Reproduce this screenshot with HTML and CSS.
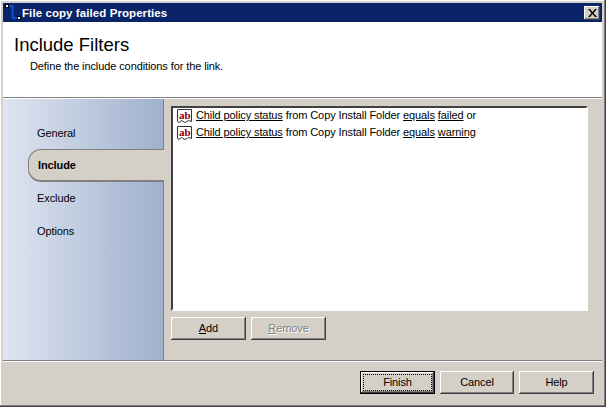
FILE: index.html
```html
<!DOCTYPE html>
<html lang="en">
<head>
    <meta charset="UTF-8">
    <meta name="viewport" content="width=device-width, initial-scale=1.0">
    <title>File copy failed Properties</title>
    <link rel="stylesheet" href="styles.css">
</head>
<body>
    <div class="window">
        <div class="titlebar">
            <svg class="app-icon" width="19" height="19" viewBox="0 0 19 19">
                <path d="M5 3H9.500V15H15" fill="none" stroke="#0a4fd0" stroke-width="2"/>
                <rect x="2.500" y="1.500" width="3" height="3" fill="#fff" stroke="#000"/>
                <rect x="14.500" y="13.500" width="3" height="3" fill="#fff" stroke="#000"/>
            </svg>
            <span class="title-text">File copy failed Properties</span>
            <button class="close-btn" type="button">
                <svg width="9" height="8" viewBox="0 0 9 8">
                    <path d="M0 0H2L4.500 3L7 0H9L5.500 4L9 8H7L4.500 5L2 8H0L3.500 4Z" fill="#000"/>
                </svg>
            </button>
        </div>

        <div class="header">
            <h1>Include Filters</h1>
            <p>Define the include conditions for the link.</p>
        </div>

        <div class="main">
            <nav class="sidebar">
                <div class="nav-item">General</div>
                <div class="nav-item active">Include</div>
                <div class="nav-item">Exclude</div>
                <div class="nav-item">Options</div>
            </nav>

            <div class="content">
                <div class="filter-list">
                    <div class="filter-row">
                        <svg class="ab-icon" width="17" height="16" viewBox="0 0 17 16">
                            <path d="M1.500 1.500H15.500V13.500L12.500 12.500L9 14.500L5.500 12.500L3 14.500L1.500 13.500Z" fill="#fff" stroke="#333"/>
                            <text x="3" y="10.500" class="ab-text">ab</text>
                        </svg>
                        <span class="filter-text"><u>Child policy status</u> from Copy Install Folder <u>equals</u> <u>failed</u> or</span>
                    </div>
                    <div class="filter-row">
                        <svg class="ab-icon" width="17" height="16" viewBox="0 0 17 16">
                            <path d="M1.500 1.500H15.500V13.500L12.500 12.500L9 14.500L5.500 12.500L3 14.500L1.500 13.500Z" fill="#fff" stroke="#333"/>
                            <text x="3" y="10.500" class="ab-text">ab</text>
                        </svg>
                        <span class="filter-text"><u>Child policy status</u> from Copy Install Folder <u>equals</u> <u>warning</u></span>
                    </div>
                </div>
                <div class="list-buttons">
                    <button class="btn" type="button"><u>A</u>dd</button>
                    <button class="btn disabled" type="button"><u>R</u>emove</button>
                </div>
            </div>
        </div>

        <div class="footer">
            <button class="btn default" type="button"><span class="focus">Finish</span></button>
            <button class="btn cancel" type="button">Cancel</button>
            <button class="btn" type="button">Help</button>
        </div>
    </div>
</body>
</html>
```

FILE: styles.css
```css
* {
    box-sizing: border-box;
}

html, body {
    margin: 0;
    height: 100%;
    overflow: hidden;
}

body {
    font-family: "Liberation Sans", sans-serif;
    font-size: 11px;
    letter-spacing: -0.1px;
    color: #000;
    background-color: #d4d0c8;
}

.window {
    width: 606px;
    height: 407px;
    display: flex;
    flex-direction: column;
    padding: 3px;
    background-color: #d4d0c8;
    border-right: 1px solid #404040;
    border-bottom: 1px solid #404040;
    box-shadow: inset -1px -1px 0 #808080, inset 1px 1px 0 #fff;
}

.titlebar {
    height: 19px;
    display: flex;
    align-items: center;
    background-color: #0a246a;
    color: #fff;
    padding-right: 2px;
}

.app-icon {
    flex-shrink: 0;
}

.title-text {
    font-size: 11.500px;
    font-weight: bold;
    letter-spacing: 0.08px;
    flex: 1;
}

.close-btn {
    width: 16px;
    height: 14px;
    padding: 0;
    display: flex;
    align-items: center;
    justify-content: center;
    background-color: #d4d0c8;
    border: none;
    box-shadow: inset -1px -1px 0 #404040, inset 1px 1px 0 #fff, inset -2px -2px 0 #808080;
}

.header {
    height: 75px;
    background-color: #fff;
    padding: 13px 0 0 11px;
}

.header h1 {
    margin: 0;
    font-size: 18.500px;
    font-weight: normal;
    letter-spacing: 0;
    line-height: 19px;
}

.header p {
    margin: 6px 0 0 16px;
    line-height: 13px;
}

.main {
    flex: 1;
    display: flex;
    min-height: 0;
    border-top: 1px solid #808080;
    box-shadow: inset 0 1px 0 #fff;
}

.sidebar {
    width: 161px;
    padding: 17px 0 0 25px;
    margin-top: 1px;
    border-right: 1px solid #808080;
    background: linear-gradient(to right, #dfe5f1, #9fb1cd);
}

.nav-item {
    height: 33px;
    padding-left: 9px;
    display: flex;
    align-items: center;
}

.nav-item.active {
    font-weight: bold;
    margin-right: -1px;
    margin-bottom: -1px;
    background-color: #d4d0c8;
    border-radius: 13px 0 0 13px;
    border: 1px solid #808080;
    border-right: none;
    border-bottom: 2px solid #808080;
}

.content {
    flex: 1;
    padding: 8px 14px 0 7px;
    display: flex;
    flex-direction: column;
}

.filter-list {
    height: 205px;
    background-color: #fff;
    padding: 0 0 0 3px;
    border: 2px solid;
    border-color: #404040 #fff #fff #404040;
    outline: 1px solid #d4d0c8;
}

.filter-row {
    height: 17px;
    display: flex;
    align-items: flex-start;
    gap: 3px;
}

.filter-text {
    line-height: 15px;
}

.ab-text {
    font-family: "Liberation Serif", serif;
    font-weight: bold;
    font-size: 11px;
    letter-spacing: 0;
    fill: #8b0000;
}

.list-buttons {
    display: flex;
    gap: 5px;
    margin-top: 6px;
}

.btn {
    width: 75px;
    height: 23px;
    padding: 0 0 2px;
    font: inherit;
    letter-spacing: inherit;
    color: #000;
    background-color: #d4d0c8;
    border: none;
    box-shadow: inset -1px -1px 0 #404040, inset 1px 1px 0 #fff, inset -2px -2px 0 #808080;
}

.btn.cancel {
    width: 74px;
}

.btn.disabled {
    color: #808080;
    text-shadow: 1px 1px 0 #fff;
}

.btn.default {
    border: 1px solid #000;
    padding: 2px;
}

.focus {
    display: flex;
    align-items: center;
    justify-content: center;
    height: 100%;
    padding-bottom: 2px;
    border: 1px dotted #000;
}

.footer {
    height: 43px;
    display: flex;
    justify-content: flex-end;
    align-items: flex-start;
    gap: 5px;
    padding: 10px 8px 0 0;
    border-top: 1px solid #808080;
    box-shadow: inset 0 1px 0 #fff;
}
```
